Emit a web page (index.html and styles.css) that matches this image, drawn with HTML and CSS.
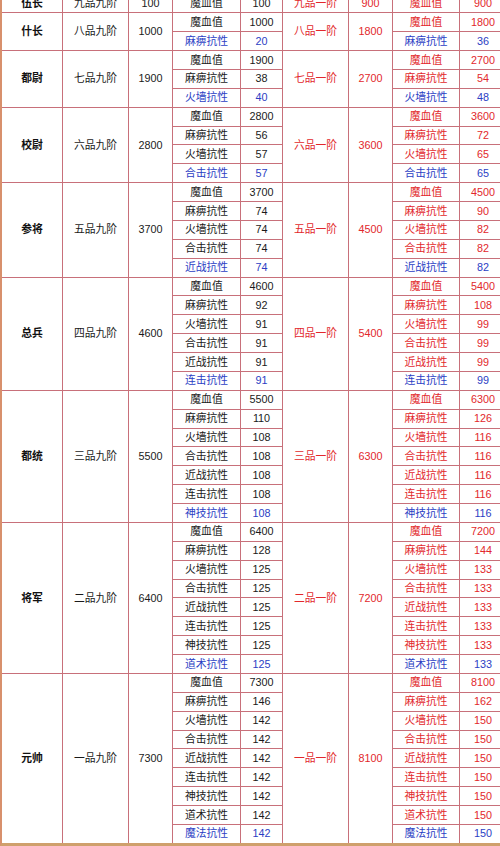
FILE: index.html
```html
<!DOCTYPE html>
<html lang="zh">
<head>
<meta charset="utf-8">
<title>军衔属性表</title>
<link rel="stylesheet" href="styles.css">
</head>
<body>
<div class="frame">
<div class="grid">
  <!-- 伍长 -->
  <div class="c name s1">伍长</div><div class="c s1">九品九阶</div><div class="c s1">100</div>
  <div class="c">魔血值</div><div class="c">100</div>
  <div class="c red s1">九品一阶</div><div class="c red s1">900</div>
  <div class="c red">魔血值</div><div class="c red">900</div>

  <!-- 什长 -->
  <div class="c name s2">什长</div><div class="c s2">八品九阶</div><div class="c s2">1000</div>
  <div class="c">魔血值</div><div class="c">1000</div>
  <div class="c red s2">八品一阶</div><div class="c red s2">1800</div>
  <div class="c red">魔血值</div><div class="c red">1800</div>
  <div class="c blue">麻痹抗性</div><div class="c blue">20</div><div class="c blue">麻痹抗性</div><div class="c blue">36</div>

  <!-- 都尉 -->
  <div class="c name s3">都尉</div><div class="c s3">七品九阶</div><div class="c s3">1900</div>
  <div class="c">魔血值</div><div class="c">1900</div>
  <div class="c red s3">七品一阶</div><div class="c red s3">2700</div>
  <div class="c red">魔血值</div><div class="c red">2700</div>
  <div class="c">麻痹抗性</div><div class="c">38</div><div class="c red">麻痹抗性</div><div class="c red">54</div>
  <div class="c blue">火墙抗性</div><div class="c blue">40</div><div class="c blue">火墙抗性</div><div class="c blue">48</div>

  <!-- 校尉 -->
  <div class="c name s4">校尉</div><div class="c s4">六品九阶</div><div class="c s4">2800</div>
  <div class="c">魔血值</div><div class="c">2800</div>
  <div class="c red s4">六品一阶</div><div class="c red s4">3600</div>
  <div class="c red">魔血值</div><div class="c red">3600</div>
  <div class="c">麻痹抗性</div><div class="c">56</div><div class="c red">麻痹抗性</div><div class="c red">72</div>
  <div class="c">火墙抗性</div><div class="c">57</div><div class="c red">火墙抗性</div><div class="c red">65</div>
  <div class="c blue">合击抗性</div><div class="c blue">57</div><div class="c blue">合击抗性</div><div class="c blue">65</div>

  <!-- 参将 -->
  <div class="c name s5">参将</div><div class="c s5">五品九阶</div><div class="c s5">3700</div>
  <div class="c">魔血值</div><div class="c">3700</div>
  <div class="c red s5">五品一阶</div><div class="c red s5">4500</div>
  <div class="c red">魔血值</div><div class="c red">4500</div>
  <div class="c">麻痹抗性</div><div class="c">74</div><div class="c red">麻痹抗性</div><div class="c red">90</div>
  <div class="c">火墙抗性</div><div class="c">74</div><div class="c red">火墙抗性</div><div class="c red">82</div>
  <div class="c">合击抗性</div><div class="c">74</div><div class="c red">合击抗性</div><div class="c red">82</div>
  <div class="c blue">近战抗性</div><div class="c blue">74</div><div class="c blue">近战抗性</div><div class="c blue">82</div>

  <!-- 总兵 -->
  <div class="c name s6">总兵</div><div class="c s6">四品九阶</div><div class="c s6">4600</div>
  <div class="c">魔血值</div><div class="c">4600</div>
  <div class="c red s6">四品一阶</div><div class="c red s6">5400</div>
  <div class="c red">魔血值</div><div class="c red">5400</div>
  <div class="c">麻痹抗性</div><div class="c">92</div><div class="c red">麻痹抗性</div><div class="c red">108</div>
  <div class="c">火墙抗性</div><div class="c">91</div><div class="c red">火墙抗性</div><div class="c red">99</div>
  <div class="c">合击抗性</div><div class="c">91</div><div class="c red">合击抗性</div><div class="c red">99</div>
  <div class="c">近战抗性</div><div class="c">91</div><div class="c red">近战抗性</div><div class="c red">99</div>
  <div class="c blue">连击抗性</div><div class="c blue">91</div><div class="c blue">连击抗性</div><div class="c blue">99</div>

  <!-- 都统 -->
  <div class="c name s7">都统</div><div class="c s7">三品九阶</div><div class="c s7">5500</div>
  <div class="c">魔血值</div><div class="c">5500</div>
  <div class="c red s7">三品一阶</div><div class="c red s7">6300</div>
  <div class="c red">魔血值</div><div class="c red">6300</div>
  <div class="c">麻痹抗性</div><div class="c">110</div><div class="c red">麻痹抗性</div><div class="c red">126</div>
  <div class="c">火墙抗性</div><div class="c">108</div><div class="c red">火墙抗性</div><div class="c red">116</div>
  <div class="c">合击抗性</div><div class="c">108</div><div class="c red">合击抗性</div><div class="c red">116</div>
  <div class="c">近战抗性</div><div class="c">108</div><div class="c red">近战抗性</div><div class="c red">116</div>
  <div class="c">连击抗性</div><div class="c">108</div><div class="c red">连击抗性</div><div class="c red">116</div>
  <div class="c blue">神技抗性</div><div class="c blue">108</div><div class="c blue">神技抗性</div><div class="c blue">116</div>

  <!-- 将军 -->
  <div class="c name s8">将军</div><div class="c s8">二品九阶</div><div class="c s8">6400</div>
  <div class="c">魔血值</div><div class="c">6400</div>
  <div class="c red s8">二品一阶</div><div class="c red s8">7200</div>
  <div class="c red">魔血值</div><div class="c red">7200</div>
  <div class="c">麻痹抗性</div><div class="c">128</div><div class="c red">麻痹抗性</div><div class="c red">144</div>
  <div class="c">火墙抗性</div><div class="c">125</div><div class="c red">火墙抗性</div><div class="c red">133</div>
  <div class="c">合击抗性</div><div class="c">125</div><div class="c red">合击抗性</div><div class="c red">133</div>
  <div class="c">近战抗性</div><div class="c">125</div><div class="c red">近战抗性</div><div class="c red">133</div>
  <div class="c">连击抗性</div><div class="c">125</div><div class="c red">连击抗性</div><div class="c red">133</div>
  <div class="c">神技抗性</div><div class="c">125</div><div class="c red">神技抗性</div><div class="c red">133</div>
  <div class="c blue">道术抗性</div><div class="c blue">125</div><div class="c blue">道术抗性</div><div class="c blue">133</div>

  <!-- 元帅 -->
  <div class="c name s9">元帅</div><div class="c s9">一品九阶</div><div class="c s9">7300</div>
  <div class="c">魔血值</div><div class="c">7300</div>
  <div class="c red s9">一品一阶</div><div class="c red s9">8100</div>
  <div class="c red">魔血值</div><div class="c red">8100</div>
  <div class="c">麻痹抗性</div><div class="c">146</div><div class="c red">麻痹抗性</div><div class="c red">162</div>
  <div class="c">火墙抗性</div><div class="c">142</div><div class="c red">火墙抗性</div><div class="c red">150</div>
  <div class="c">合击抗性</div><div class="c">142</div><div class="c red">合击抗性</div><div class="c red">150</div>
  <div class="c">近战抗性</div><div class="c">142</div><div class="c red">近战抗性</div><div class="c red">150</div>
  <div class="c">连击抗性</div><div class="c">142</div><div class="c red">连击抗性</div><div class="c red">150</div>
  <div class="c">神技抗性</div><div class="c">142</div><div class="c red">神技抗性</div><div class="c red">150</div>
  <div class="c">道术抗性</div><div class="c">142</div><div class="c red">道术抗性</div><div class="c red">150</div>
  <div class="c blue">魔法抗性</div><div class="c blue">142</div><div class="c blue">魔法抗性</div><div class="c blue">150</div>
</div>
</div>
</body>
</html>
```

FILE: styles.css
```css
html, body {
  margin: 0;
  padding: 0;
  background: #ffffff;
}
body {
  width: 500px;
  height: 846px;
  overflow: hidden;
}
.frame {
  width: 520px;
  height: 843px;
  border-left: 2px solid #d8906c;
  border-bottom: 3px solid #cfa06c;
  overflow: hidden;
  box-sizing: content-box;
}
.grid {
  display: grid;
  grid-template-columns: 60px 65px 43px 67px 41px 65px 43px 66px 46px;
  grid-auto-rows: 17.89px;
  gap: 1px;
  background: #c8707a;
  margin-top: -5.6px;
  font-family: "Liberation Sans", "Noto Sans CJK SC", sans-serif;
  font-size: 10.8px;
  color: #1a1a1a;
}
.c {
  background: #ffffff;
  display: flex;
  align-items: center;
  justify-content: center;
  white-space: nowrap;
  line-height: 1;
}
.name {
  font-weight: bold;
  color: #111111;
}
.red {
  color: #e2282c;
}
.blue {
  color: #2b3ec4;
}
.s1 { grid-row: span 1; }
.s2 { grid-row: span 2; }
.s3 { grid-row: span 3; }
.s4 { grid-row: span 4; }
.s5 { grid-row: span 5; }
.s6 { grid-row: span 6; }
.s7 { grid-row: span 7; }
.s8 { grid-row: span 8; }
.s9 { grid-row: span 9; }
```
